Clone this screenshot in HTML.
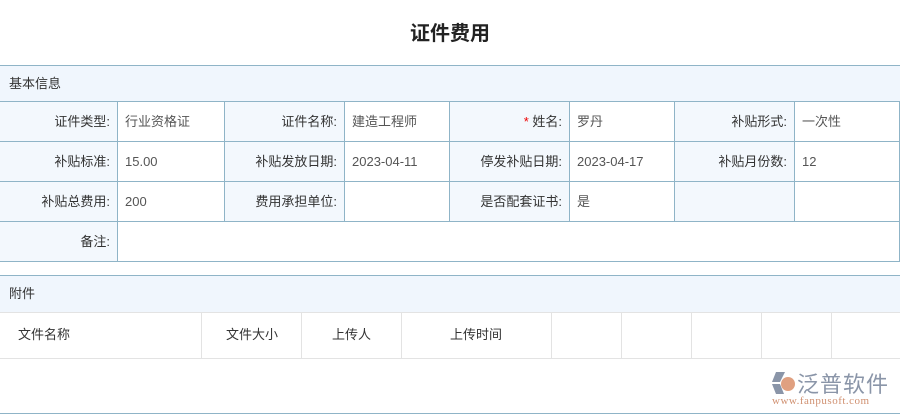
<!DOCTYPE html><html><head><meta charset="utf-8"><style>
body{margin:0;width:900px;height:416px;background:#fff;font-family:"Liberation Sans","Noto Sans CJK SC",sans-serif;font-size:13px;color:#333;position:relative;overflow:hidden}
.a{position:absolute;box-sizing:border-box}
.t{left:0;top:17px;width:900px;text-align:center;font-size:20px;font-weight:bold;color:#222}
.h{left:0;width:900px;background:#f0f6fd;border-top:1px solid #8fb4c7;padding-left:9px;line-height:36px}
.c{border-right:1px solid #8fb4c7;border-bottom:1px solid #8fb4c7;line-height:39px;padding:0 7px;overflow:hidden;white-space:nowrap}
.l{background:#f3f8fd;text-align:right;color:#333}
.v{background:#fff;color:#555}
.g{border-right:1px solid #e3e3e3;line-height:44px;padding-left:18px;top:313px;height:45px}
</style></head><body>
<div class="a t">证件费用</div>
<div class="a h" style="top:65px;height:37px;border-bottom:1px solid #8fb4c7">基本信息</div>
<div id="rows"></div>
<div class="a" style="left:0;top:275px;width:900px;border-top:1px solid #8fb4c7"></div>
<div class="a h" style="top:276px;height:37px;border-top:none;border-bottom:1px solid #e3e3e3">附件</div>
<div class="a g" style="left:0;width:202px">文件名称</div>
<div class="a g" style="left:202px;width:100px;padding-left:24px">文件大小</div>
<div class="a g" style="left:302px;width:100px;padding-left:30px">上传人</div>
<div class="a g" style="left:402px;width:150px;padding-left:48px">上传时间</div>
<div class="a g" style="left:552px;width:70px"></div>
<div class="a g" style="left:622px;width:70px"></div>
<div class="a g" style="left:692px;width:70px"></div>
<div class="a g" style="left:762px;width:70px"></div>
<div class="a" style="left:0;top:358px;width:900px;border-top:1px solid #e3e3e3"></div>
<div class="a" style="left:0;top:413px;width:900px;border-top:1px solid #8fb4c7"></div>
<svg class="a" style="left:770px;top:370px" width="26" height="26" viewBox="0 0 26 26"><path d="M6 2h9l-5 10H2z" fill="#8a95a8"/><path d="M2 14h8l4 10H6z" fill="#8a95a8"/><circle cx="18" cy="14" r="7" fill="#e0a080"/></svg>
<div class="a" style="left:797px;top:367px;font-size:22px;color:#8a95a8;letter-spacing:1px">泛普软件</div>
<div class="a" style="left:772px;top:395px;font-size:11px;color:#d09070;font-family:'Liberation Serif',serif;letter-spacing:0.5px">www.fanpusoft.com</div>
<script>
var cols=[0,118,225,345,450,570,675,795,900];
var rows=[["证件类型:","行业资格证","证件名称:","建造工程师","<span style='color:#e00'>*</span> 姓名:","罗丹","补贴形式:","一次性"],
["补贴标准:","15.00","补贴发放日期:","2023-04-11","停发补贴日期:","2023-04-17","补贴月份数:","12"],
["补贴总费用:","200","费用承担单位:","","是否配套证书:","是","",""]];
var h="";
rows.forEach(function(r,i){var y=102+i*40;r.forEach(function(x,j){h+="<div class='a c "+(j%2?"v":"l")+"' style='left:"+cols[j]+"px;top:"+y+"px;width:"+(cols[j+1]-cols[j])+"px;height:40px'>"+x+"</div>"})});
h+="<div class='a c l' style='left:0;top:222px;width:118px;height:40px'>备注:</div><div class='a c v' style='left:118px;top:222px;width:782px;height:40px'></div>";
document.getElementById("rows").innerHTML=h;
</script>
</body></html>
